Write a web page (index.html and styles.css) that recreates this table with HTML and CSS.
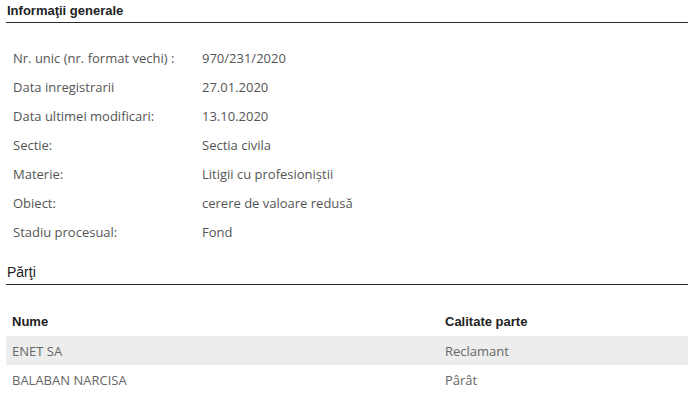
FILE: index.html
```html
<!DOCTYPE html>
<html lang="ro">
<head>
<meta charset="utf-8">
<link rel="stylesheet" href="styles.css">
</head>
<body>
<div class="page">
  <h2 class="section-title bold">Informaţii generale</h2>
  <table class="info">
    <tr><td class="label">Nr. unic (nr. format vechi) :</td><td class="value">970/231/2020</td></tr>
    <tr><td class="label">Data inregistrarii</td><td class="value">27.01.2020</td></tr>
    <tr><td class="label">Data ultimei modificari:</td><td class="value">13.10.2020</td></tr>
    <tr><td class="label">Sectie:</td><td class="value">Sectia civila</td></tr>
    <tr><td class="label">Materie:</td><td class="value">Litigii cu profesioniştii</td></tr>
    <tr><td class="label">Obiect:</td><td class="value">cerere de valoare redusă</td></tr>
    <tr><td class="label">Stadiu procesual:</td><td class="value">Fond</td></tr>
  </table>
  <h2 class="section-title">Părţi</h2>
  <table class="parti">
    <thead>
      <tr><th class="col-name">Nume</th><th>Calitate parte</th></tr>
    </thead>
    <tbody>
      <tr class="alt"><td>ENET SA</td><td>Reclamant</td></tr>
      <tr><td>BALABAN NARCISA</td><td>Pârât</td></tr>
    </tbody>
  </table>
</div>
</body>
</html>
```
FILE: styles.css
```css
html, body {
  margin: 0;
  padding: 0;
  background: #fff;
}
.page {
  padding: 0 0 0 6px;
  font-family: "Open Sans", "Liberation Sans", sans-serif;
}
.section-title {
  margin: 0;
  font-family: "Liberation Sans", Arial, sans-serif;
  font-size: 14px;
  font-weight: normal;
  color: #222;
  padding: 3px 0 4px 1px;
  line-height: 15px;
  border-bottom: 1px solid #2a2a2a;
}
.section-title.bold {
  font-size: 13px;
  font-weight: bold;
}
.info {
  border-collapse: collapse;
  margin: 20px 0 16px 0;
  font-size: 13px;
  color: #555;
}
.info td {
  height: 29px;
  padding: 0;
  vertical-align: middle;
}
.info .label {
  width: 189px;
  padding-left: 7px;
}
.parti {
  border-collapse: collapse;
  width: 100%;
  margin-top: 22px;
  font-size: 13px;
  color: #666;
}
.parti th {
  text-align: left;
  font-family: "Liberation Sans", Arial, sans-serif;
  font-weight: bold;
  font-size: 13px;
  color: #222;
  height: 29px;
  padding: 0 0 0 6px;
}
.parti .col-name {
  width: 427px;
}
.parti td {
  height: 29px;
  padding: 0 0 0 6px;
}
.parti .alt td {
  background: #ededed;
}
```
